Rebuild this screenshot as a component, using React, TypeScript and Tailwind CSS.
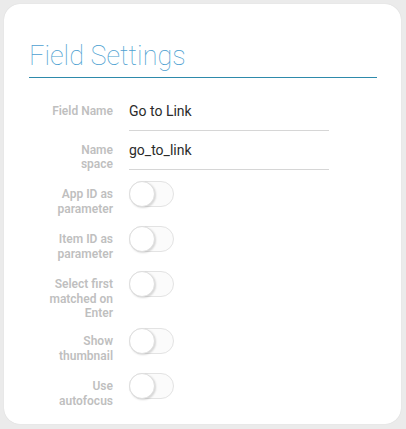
const fields = [
  { label: ['Field Name'], value: 'Go to Link' },
  { label: ['Name', 'space'], value: 'go_to_link' },
];

const toggles = [
  { label: ['App ID as', 'parameter'], h: 'h-[45px]' },
  { label: ['Item ID as', 'parameter'], h: 'h-[45px]' },
  { label: ['Select first', 'matched on', 'Enter'], h: 'h-[57px]' },
  { label: ['Show', 'thumbnail'], h: 'h-[45px]' },
  { label: ['Use', 'autofocus'], h: 'h-[45px]' },
];

const Toggle = () => (
  <div className="relative w-[45px] h-[26px] rounded-full border border-[#e3e3e3] bg-[#fbfbfb]">
    <div className="absolute left-[-1px] top-[-1px] w-[26px] h-[26px] rounded-full bg-white border border-[#dedede] shadow-[1px_1px_2px_rgba(0,0,0,0.15)]" />
  </div>
);

export default function App() {
  return (
    <div className="w-[406px] h-[429px] bg-[#ebebeb] pt-[4px] pl-[4px] font-['Roboto',sans-serif]">
      <div className="w-[397px] h-[420px] bg-white rounded-[16px] shadow-[0_0_1px_rgba(0,0,0,0.15)] pt-[36px] px-[25px]">
        <div className="w-[348px] border-b border-[#2e8aab] pb-[5px]">
          <h1 className="text-[27px] leading-[32px] font-thin text-[#4d9fd1]">Field Settings</h1>
        </div>
        <div className="mt-[24px] flex flex-col gap-[10px]">
          {fields.map((f) => (
            <div key={f.value} className="flex gap-[16px]">
              <div className="w-[84px] pt-[2px] text-right text-[12px] leading-[14px] font-semibold text-[#bfbfbf]">
                {f.label.map((l) => (
                  <div key={l}>{l}</div>
                ))}
              </div>
              <div className="w-[200px] h-[29px] border-b border-[#d6d6d6] text-[14px] leading-[18px] text-[#2b2b2b]">
                {f.value}
              </div>
            </div>
          ))}
        </div>
        <div className="mt-[10px] flex flex-col">
          {toggles.map((t) => (
            <div key={t.label.join(' ')} className={`flex gap-[16px] ${t.h}`}>
              <div className="w-[84px] pt-[6px] text-right text-[12px] leading-[14.5px] font-semibold text-[#bfbfbf]">
                {t.label.map((l) => (
                  <div key={l}>{l}</div>
                ))}
              </div>
              <Toggle />
            </div>
          ))}
        </div>
      </div>
    </div>
  );
}
